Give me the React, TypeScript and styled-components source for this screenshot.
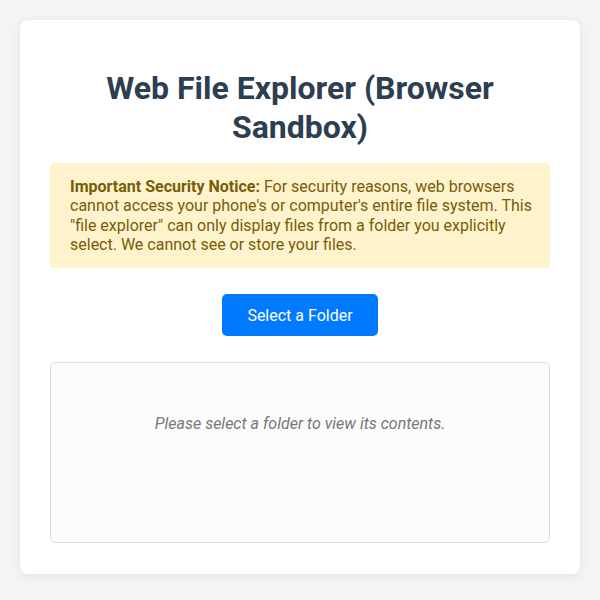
import React from "react";
import styled, { createGlobalStyle } from "styled-components";

const Global = createGlobalStyle`
  html, body { margin: 0; padding: 0; }
  body {
    background: #f3f4f4;
    font-family: Roboto, "Liberation Sans", sans-serif;
    color: #333;
  }
  * { box-sizing: border-box; }
`;

const Page = styled.div`
  padding: 20px;
`;

const Card = styled.div`
  background: #ffffff;
  border-radius: 8px;
  box-shadow: 0 2px 10px rgba(0, 0, 0, 0.08);
  padding: 30px 30px 31px;
  display: flex;
  flex-direction: column;
`;

const Title = styled.h1`
  margin: 19px 0 16px;
  font-size: 32px;
  line-height: 39px;
  font-weight: 700;
  text-align: center;
  color: #2c3e50;
`;

const Notice = styled.div`
  background: #fff3cd;
  color: #765d08;
  border-radius: 4px;
  padding: 14px 16px 14px 20px;
  font-size: 16px;
  line-height: 19.3px;
`;

const Strong = styled.strong`
  font-weight: 700;
`;

const Actions = styled.div`
  display: flex;
  justify-content: center;
  margin: 26px 0;
`;

const Button = styled.button`
  background: #007bff;
  color: #ffffff;
  border: none;
  border-radius: 5px;
  padding: 0 25px;
  height: 42px;
  font-family: Roboto, "Liberation Sans", sans-serif;
  font-size: 16px;
  cursor: pointer;
`;

const Explorer = styled.div`
  border: 1px solid #dddddd;
  border-radius: 5px;
  background: #fcfcfc;
  min-height: 181px;
  padding: 51px 20px 20px;
`;

const Placeholder = styled.p`
  margin: 0;
  text-align: center;
  font-style: italic;
  color: #777777;
  font-size: 16px;
  line-height: 19px;
`;

export default function App() {
  return (
    <>
      <Global />
      <Page>
        <Card>
          <Title>Web File Explorer (Browser Sandbox)</Title>
          <Notice>
            <Strong>Important Security Notice:</Strong> For security reasons, web
            browsers cannot access your phone's or computer's entire file system.
            This "file explorer" can only display files from a folder you
            explicitly select. We cannot see or store your files.
          </Notice>
          <Actions>
            <Button>Select a Folder</Button>
          </Actions>
          <Explorer>
            <Placeholder>Please select a folder to view its contents.</Placeholder>
          </Explorer>
        </Card>
      </Page>
    </>
  );
}
